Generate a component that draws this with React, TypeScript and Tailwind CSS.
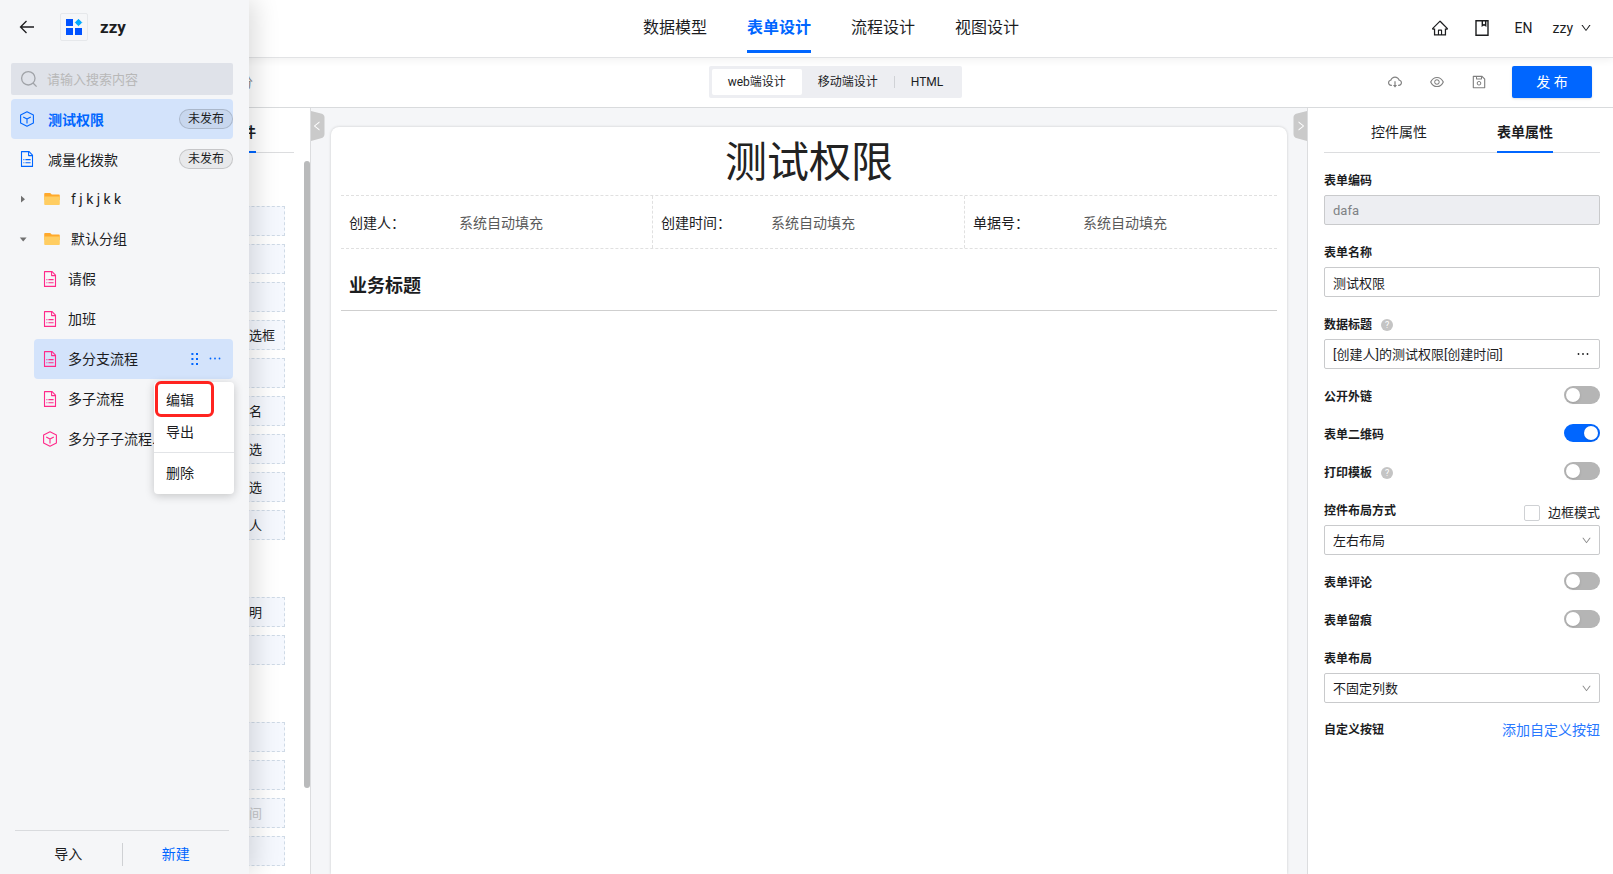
import {useState} from "react";
import type {ReactNode} from "react";
import {
	AiOutlineCloudDownload,
	AiOutlineDown,
	AiOutlineEye,
	AiOutlineHome,
	AiOutlineLeft,
	AiOutlineRight,
	AiOutlineSave,
} from "react-icons/ai";

const navItems = ["数据模型", "表单设计", "流程设计", "视图设计"];

const paletteGroups = [
	["", "", "", "选框", "", "名", "选", "选", "人"],
	["明", ""],
	["", "", "间", ""],
];

const metaFields = ["创建人：", "创建时间：", "单据号："];

const defaultGroup = [
	{name: "请假", icon: "file"},
	{name: "加班", icon: "file"},
	{name: "多分支流程", icon: "file"},
	{name: "多子流程", icon: "file"},
	{name: "多分子子流程...", icon: "cube"},
];

function ArrowLeftIcon() {
	return (
		<svg width="16" height="16" viewBox="0 0 16 16" fill="none" stroke="currentColor" strokeWidth="1.300">
			<path d="M7.500 2 1.500 8l6 6M1.500 8H15" />
		</svg>
	);
}

function SearchIcon() {
	return (
		<svg className="text-[#a0a3a8]" width="18" height="18" viewBox="0 0 18 18" fill="none" stroke="currentColor" strokeWidth="1.300">
			<circle cx="8.300" cy="8.300" r="6.700" />
			<path d="m13 13 3.600 3.600" />
		</svg>
	);
}

function CubeIcon({className}: {className: string}) {
	return (
		<svg className={className} width="16" height="16" viewBox="0 0 16 16" fill="none" stroke="currentColor" strokeWidth="1.1" strokeLinejoin="round">
			<path d="M8 .8 14.4 4v8L8 15.2 1.6 12V4Z" />
			<path d="M4.2 5.9 8 8l3.8-2.1M8 8v4.4" />
		</svg>
	);
}

function FileIcon({className}: {className: string}) {
	return (
		<svg className={className} width="16" height="16" viewBox="0 0 16 16" fill="none" stroke="currentColor" strokeWidth="1.1" strokeLinejoin="round">
			<path d="M2.5.6h7.6l3.4 3.5v11.3h-11Z" />
			<path d="M9.6.8v3.8h3.8" />
			<path d="M4.4 8.6h1M4.4 11.7h1M6.4 8.6h5.2M6.4 11.7h5.2" />
		</svg>
	);
}

function FolderIcon() {
	return (
		<svg width="16" height="16" viewBox="0 0 16 16">
			<path d="M1.4 2h4.8l1.6 1.6h6.8c.8 0 1.2.4 1.2 1.2V9H.2V3.2C.2 2.4.6 2 1.4 2Z" fill="#ffa92b" />
			<path d="M.2 5.6h15.6v7.2c0 .8-.4 1.2-1.2 1.2H1.4c-.8 0-1.2-.4-1.2-1.2Z" fill="#ffcd62" />
		</svg>
	);
}

function LogoIcon() {
	return (
		<svg width="18" height="18" viewBox="0 0 18 18">
			<path d="M1 1h7v7H1ZM1 10h7v7H1ZM10 10h7v7h-7Z" fill="#0052ff" />
			<path d="M13.500 1.300 16.700 4.500l-3.200 3.200-3.200-3.200Z" fill="#00aaff" stroke="#00aaff" strokeLinejoin="round" />
		</svg>
	);
}

function BookmarkIcon() {
	return (
		<svg width="16" height="18" viewBox="0 0 16 18" fill="none" stroke="currentColor" strokeWidth="1.4">
			<path d="M2 1.7h12v14.6H2ZM8.3 1.7v5l1.7-1.2 1.7 1.2v-5" />
		</svg>
	);
}

function HelpIcon() {
	return (
		<span className="ml-[9px] flex size-3 items-center justify-center rounded-full bg-[#c4c4c4] text-[9px] leading-3 text-white">
			?
		</span>
	);
}

function Badge() {
	return (
		<span className="ml-auto rounded-full border border-black/15 bg-black/5 px-2 text-xs leading-[18px]">未发布</span>
	);
}

function Field({label, id, help, children}: {label: string; id: string; help?: boolean; children: ReactNode}) {
	return (
		<div>
			<div className="flex h-[42px] items-end pb-1">
				<label htmlFor={id} className="text-xs font-bold leading-5">
					{label}
				</label>
				{help && <div className="pb-1"><HelpIcon /></div>}
			</div>
			{children}
		</div>
	);
}

function SwitchRow({label, id, on, help}: {label: string; id: string; on?: boolean; help?: boolean}) {
	return (
		<div className="flex h-[38px] items-center">
			<label htmlFor={id} className="pt-0.5 text-xs font-bold leading-5">
				{label}
			</label>
			{help && <div className="pt-0.5"><HelpIcon /></div>}
			<input
				type="checkbox"
				role="switch"
				id={id}
				defaultChecked={on}
				className="mb-0.5 ml-auto flex h-[18px] w-9 appearance-none items-center rounded-full bg-[#b5b5b5] px-0.5 before:size-[14px] before:rounded-full before:bg-white before:shadow checked:justify-end checked:bg-[#0066ff]"
			/>
		</div>
	);
}

function SelectBox({id, value}: {id: string; value: string}) {
	return (
		<div className="relative">
			<select id={id} className="h-[30px] w-full appearance-none rounded-xs border border-[#c9cacc] bg-white px-2 pt-0.5 text-[13px]">
				<option>{value}</option>
			</select>
			<AiOutlineDown className="pointer-events-none absolute right-2 top-[10px] size-[11px] text-[#8c8c8c]" />
		</div>
	);
}

function Drawer() {
	const [active, setActive] = useState("多分支流程");

	return (
		<aside className="absolute inset-y-0 left-0 z-20 flex w-[249px] flex-col bg-[#f5f6f8] shadow-[6px_0_24px_rgba(0,0,0,0.14)]">
			<div className="flex h-[54px] items-center pl-[19px]">
				<button aria-label="返回">
					<ArrowLeftIcon />
				</button>
				<span className="ml-[25px] flex size-7 items-center justify-center rounded-xs border border-[#e6e8eb]">
					<LogoIcon />
				</span>
				<strong className="ml-3 pt-0.5 text-[17px] font-bold">zzy</strong>
			</div>
			<div className="mt-[9px] ml-[11px] mr-4 flex h-8 items-center rounded-xs bg-[#dfe2e9] pl-[9px]">
				<SearchIcon />
				<input
					type="text"
					aria-label="搜索"
					placeholder="请输入搜索内容"
					className="ml-[9px] w-44 bg-transparent pt-px text-[13px] outline-none placeholder:text-[#b8b8b8]"
				/>
			</div>

			<ul className="mt-1 ml-[11px] mr-4 text-sm">
				<li className="flex h-10 items-center rounded bg-[#d3e3fb] pl-2">
					<CubeIcon className="text-[#0066ff]" />
					<span className="ml-[13px] pt-0.5 font-bold text-[#0066ff]">测试权限</span>
					<Badge />
				</li>
				<li className="flex h-10 items-center pl-2">
					<FileIcon className="text-[#0066ff]" />
					<span className="ml-[13px] pt-0.5">减量化拨款</span>
					<Badge />
				</li>
				<li className="flex h-10 items-center pl-2">
					<svg className="text-[#707070]" width="8" height="8" viewBox="0 0 8 8" fill="currentColor">
						<path d="M2 .8 6 4.2 2 7.6Z" />
					</svg>
					<span className="ml-[17px] mr-[11px]"><FolderIcon /></span>
					f j k j k k
				</li>
				<li>
					<div className="flex h-10 items-center pl-2">
						<svg className="text-[#707070]" width="8" height="8" viewBox="0 0 8 8" fill="currentColor">
							<path d="M.8 2.4h6.8L4.2 6.4Z" />
						</svg>
						<span className="ml-[17px] mr-[11px]"><FolderIcon /></span>
						默认分组
					</div>
					<ul className="ml-[23px]">
						{defaultGroup.map((item) => (
							<li
								key={item.name}
								onClick={() => setActive(item.name)}
								className={`relative flex h-10 items-center rounded pl-2 ${active === item.name ? "bg-[#d3e3fb]" : ""}`}
							>
								{item.icon === "cube" ? (
									<CubeIcon className="text-[#ff2a8a]" />
								) : (
									<FileIcon className="text-[#ff2a8a]" />
								)}
								<span className="ml-[10px]">{item.name}</span>
								{active === item.name && (
									<>
										<svg className="ml-auto mr-[10px] text-[#0066ff]" width="8" height="14" viewBox="0 0 8 14" fill="currentColor">
											<path d="M.4 1h2v2h-2ZM5 1h2v2H5ZM.4 6h2v2h-2ZM5 6h2v2H5ZM.4 11h2v2h-2ZM5 11h2v2H5Z" />
										</svg>
										<button aria-label="更多" className="mr-3 text-[#0066ff]">
											<svg width="12" height="12" viewBox="0 0 12 12" fill="currentColor">
												<circle cx="1.5" cy="5.5" r=".9" />
												<circle cx="6" cy="5.5" r=".9" />
												<circle cx="10.5" cy="5.5" r=".9" />
											</svg>
										</button>
										<ContextMenu />
									</>
								)}
							</li>
						))}
					</ul>
				</li>
			</ul>

			<div className="ml-[15px] mr-5 mt-auto flex h-11 items-center border-t border-[#d9dbde] pt-1 text-sm">
				<button className="flex-1 pb-0.5">导入</button>
				<span className="h-[23px] w-px bg-[#cfd1d4]" />
				<button className="flex-1 pb-0.5 text-[#0066ff]">新建</button>
			</div>
		</aside>
	);
}

function ContextMenu() {
	return (
		<div className="absolute -right-px top-[43px] z-10 flex h-28 w-20 flex-col rounded bg-white text-sm shadow-[0_2px_10px_rgba(0,0,0,0.2)]">
			<button className="mt-[2px] h-8 pl-3 text-left">编辑</button>
			<button className="h-8 pl-3 text-left">导出</button>
			<hr className="mt-1 border-[#e2e4e7]" />
			<button className="h-10 pl-3 text-left">删除</button>
			<span className="pointer-events-none absolute -top-px left-px h-9 w-[59px] rounded-md border-3 border-[#ff2420]" />
		</div>
	);
}

function Palette() {
	return (
		<aside className="flex w-[311px] shrink-0 flex-col overflow-hidden border-r border-[#dcdddf] bg-white">
			<div className="mr-4 flex h-[45px] shrink-0 justify-end border-b border-[#dcdddf] pr-[38px]">
				<button className="h-[45px] border-b-2 border-[#0066ff] pt-1 text-sm font-bold">控件</button>
			</div>
			<div className="flex min-h-0 flex-1">
				<div className="flex-1">
					{paletteGroups.map((group, i) => (
						<div key={i} className={`ml-auto mr-[19px] flex w-[130px] flex-col gap-2 ${i === 0 ? "pt-[53px]" : "pt-[57px]"}`}>
							{group.map((text, j) => (
								<div
									key={j}
									className={`h-[30px] border border-dashed border-[#cfdae6] bg-[#f5f8fe] pl-[93px] pt-px text-[13px] leading-7 ${text === "间" ? "text-[#c4c6c9]" : ""}`}
								>
									{text}
								</div>
							))}
						</div>
					))}
				</div>
				<div className="mt-2 h-[87%] w-[6px] rounded-full bg-[#b9babb]" />
			</div>
		</aside>
	);
}

function Canvas() {
	return (
		<main className="relative min-w-0 flex-1 bg-[#f5f6f8] px-5 pt-[19px]">
			<button aria-label="收起左侧" className="absolute left-0 top-[3px] flex h-[30px] w-[14px] items-center text-white">
				<svg className="absolute inset-0" width="14" height="30" viewBox="0 0 14 30" fill="#cacaca">
					<path d="M0 0 10 2.5Q13.5 3.3 13.5 6.5V23Q13.5 26.5 10 27.3L0 30Z" />
				</svg>
				<AiOutlineLeft className="relative size-3" />
			</button>
			<button aria-label="收起右侧" className="absolute right-0 top-[3px] flex h-[30px] w-[14px] items-center text-white">
				<svg className="absolute inset-0" width="14" height="30" viewBox="0 0 14 30" fill="#cacaca">
					<path d="M14 0 4 2.5Q.5 3.3.5 6.5V23Q.5 26.5 4 27.3L14 30Z" />
				</svg>
				<AiOutlineRight className="relative ml-0.5 size-3" />
			</button>
			<div className="h-full rounded-t-lg bg-white px-[10px] shadow-[0_0_3px_rgba(0,0,0,0.18)]">
				<h1 className="h-[68px] pt-0.5 text-center text-[42px] leading-[68px] text-[#222]">测试权限</h1>
				<dl className="grid grid-cols-3 divide-x divide-dashed divide-[#e0e0e0] border-y border-dashed border-[#e0e0e0] text-sm">
					{metaFields.map((label) => (
						<div key={label} className="flex h-[52px] items-center pl-2 pt-px">
							<dt className="w-[110px]">{label}</dt>
							<dd className="text-[#5a5a5a]">系统自动填充</dd>
						</div>
					))}
				</dl>
				<h2 className="h-[62px] border-b border-[#cfcfcf] pl-2 pt-[6px] text-lg font-bold leading-[62px]">业务标题</h2>
			</div>
		</main>
	);
}

function Properties() {
	return (
		<aside className="w-[306px] shrink-0 border-l border-[#dcdddf] bg-white pl-4 pr-[13px]">
			<div className="flex h-[45px] justify-center gap-[70px] border-b border-[#dcdddf] text-sm">
				<button className="h-[45px] border-b-2 border-transparent pt-1">控件属性</button>
				<button className="h-[45px] border-b-2 border-[#0066ff] pt-1 font-bold">表单属性</button>
			</div>
			<Field label="表单编码" id="code">
				<input id="code" disabled defaultValue="dafa" className="block h-[30px] w-full rounded-xs border border-[#c9cacc] bg-[#edeef2] px-2 text-[13px] text-[#808285]" />
			</Field>
			<Field label="表单名称" id="name">
				<input id="name" defaultValue="测试权限" className="block h-[30px] w-full rounded-xs border border-[#c9cacc] px-2 text-[13px]" />
			</Field>
			<Field label="数据标题" id="title" help>
				<div className="flex h-[30px] items-center rounded-xs border border-[#c9cacc] pl-2 pr-[10px]">
					<input id="title" defaultValue="[创建人]的测试权限[创建时间]" className="min-w-0 flex-1 pt-px text-[13px] outline-none" />
					<button aria-label="编辑标题">
						<svg width="12" height="12" viewBox="0 0 12 12" fill="currentColor">
							<circle cx="1.5" cy="6" r=".9" />
							<circle cx="6" cy="6" r=".9" />
							<circle cx="10.5" cy="6" r=".9" />
						</svg>
					</button>
				</div>
			</Field>
			<div className="pt-2">
				<SwitchRow label="公开外链" id="share" />
				<SwitchRow label="表单二维码" id="qrcode" on />
				<SwitchRow label="打印模板" id="print" help />
			</div>
			<div className="flex h-[34px] items-center justify-between pt-2">
				<label htmlFor="layout" className="pb-0.5 text-xs font-bold leading-5">
					控件布局方式
				</label>
				<label className="flex items-center gap-2 pt-px text-[13px]">
					<input type="checkbox" className="size-4 appearance-none rounded-xs border border-[#cfd1d4] bg-white" />
					边框模式
				</label>
			</div>
			<SelectBox id="layout" value="左右布局" />
			<div className="pt-2">
				<SwitchRow label="表单评论" id="comment" />
				<SwitchRow label="表单留痕" id="trace" />
			</div>
			<div className="flex h-[34px] items-center pt-[6px]">
				<label htmlFor="columns" className="text-xs font-bold leading-5">
					表单布局
				</label>
			</div>
			<SelectBox id="columns" value="不固定列数" />
			<div className="mt-2 flex h-[38px] items-center justify-between">
				<span className="text-xs font-bold">自定义按钮</span>
				<a href="#" className="text-sm text-[#2878ff]">添加自定义按钮</a>
			</div>
		</aside>
	);
}

export default function App() {
	const [nav, setNav] = useState("表单设计");

	return (
		<div className="relative flex h-screen flex-col overflow-hidden bg-white font-[Roboto,'Noto_Sans_CJK_SC',sans-serif] text-[#1c1d1f]">
			<header className="z-10 grid h-[58px] shrink-0 grid-cols-[1fr_auto_1fr] items-center border-b border-[#e2e3e5] bg-white pl-[70px] pr-[21px] shadow-[0_2px_8px_rgba(0,0,0,0.06)]">
				<nav className="col-start-2 flex h-full gap-10">
					{navItems.map((item) => (
						<button
							key={item}
							onClick={() => setNav(item)}
							className={`mb-1 border-b-3 pt-[6px] text-base ${nav === item ? "border-[#0066ff] font-bold text-[#0066ff]" : "border-transparent"}`}
						>
							{item}
						</button>
					))}
				</nav>
				<div className="flex items-center justify-end pb-0.5 text-sm">
					<a href="#" aria-label="首页"><AiOutlineHome className="size-[18px]" /></a>
					<a href="#" aria-label="文档" className="ml-[25px]"><BookmarkIcon /></a>
					<button className="ml-[25px]">EN</button>
					<button className="ml-5 flex items-center gap-[7px]">
						zzy <AiOutlineDown className="size-3" />
					</button>
				</div>
			</header>

			<div className="grid h-[50px] shrink-0 grid-cols-[1fr_auto_1fr] items-center border-b border-[#d9dbdd] pb-0.5 pl-[79px] pr-[21px]">
				<span className="ml-[160px] text-sm text-[#8c8c8c]">分</span>
				<div className="flex h-8 items-center rounded-xs bg-[#edeef2] p-[3px] text-xs">
					<button className="h-[26px] rounded-xs bg-white px-4">web端设计</button>
					<button className="h-[26px] px-4">移动端设计</button>
					<span className="h-3 w-px bg-[#d0d2d6]" />
					<button className="h-[26px] px-4">HTML</button>
				</div>
				<div className="flex items-center justify-end text-[#808080]">
					<button aria-label="下载"><AiOutlineCloudDownload className="size-4" /></button>
					<button aria-label="预览" className="ml-[26px]"><AiOutlineEye className="size-4" /></button>
					<button aria-label="保存" className="ml-[26px]"><AiOutlineSave className="size-4" /></button>
					<button className="ml-[25px] h-8 w-20 rounded-xs bg-[#0066ff] text-sm text-white shadow-sm">发 布</button>
				</div>
			</div>

			<div className="flex min-h-0 flex-1">
				<Palette />
				<Canvas />
				<Properties />
			</div>

			<Drawer />
		</div>
	);
}
